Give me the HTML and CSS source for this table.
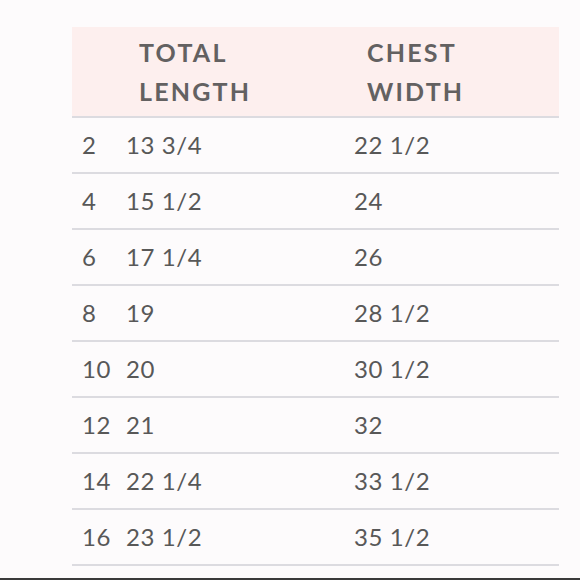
FILE: index.html
```html
<!DOCTYPE html>
<html>
<head>
<meta charset="utf-8">
<link rel="stylesheet" href="styles.css">
</head>
<body>
<div class="page">
  <table class="sizes">
    <colgroup>
      <col class="c-size">
      <col class="c-len">
      <col class="c-chest">
    </colgroup>
    <thead>
      <tr>
        <th></th>
        <th>TOTAL<br>LENGTH</th>
        <th>CHEST<br>WIDTH</th>
      </tr>
    </thead>
    <tbody>
      <tr><td>2</td><td>13 3/4</td><td>22 1/2</td></tr>
      <tr><td>4</td><td>15 1/2</td><td>24</td></tr>
      <tr><td>6</td><td>17 1/4</td><td>26</td></tr>
      <tr><td>8</td><td>19</td><td>28 1/2</td></tr>
      <tr><td>10</td><td>20</td><td>30 1/2</td></tr>
      <tr><td>12</td><td>21</td><td>32</td></tr>
      <tr><td>14</td><td>22 1/4</td><td>33 1/2</td></tr>
      <tr><td>16</td><td>23 1/2</td><td>35 1/2</td></tr>
    </tbody>
  </table>
</div>
</body>
</html>
```
FILE: styles.css
```css
html, body {
  margin: 0;
  padding: 0;
}
body {
  background: #fdfbfc;
  width: 580px;
  height: 580px;
  overflow: hidden;
}
.page {
  box-sizing: border-box;
  height: 580px;
  padding: 27px 21px 0 72px;
  border-bottom: 2px solid #3a3a3a;
}
.sizes {
  width: 487px;
  border-collapse: collapse;
  table-layout: fixed;
  font-family: Lato, "Liberation Sans", sans-serif;
  color: #585858;
}
.c-size { width: 44px; }
.c-len { width: 228px; }
.c-chest { width: 215px; }
.sizes thead tr {
  background: #fdefee;
}
.sizes th {
  height: 89px;
  padding: 0 0 0 23px;
  text-align: left;
  vertical-align: middle;
  font-weight: 700;
  font-size: 25px;
  line-height: 39px;
  letter-spacing: 2.2px;
  color: #636161;
  border-bottom: 2px solid #dcdbe0;
}
.sizes td {
  height: 54px;
  padding: 0 0 0 10px;
  font-weight: 400;
  font-size: 24px;
  line-height: 30px;
  letter-spacing: 0.6px;
  vertical-align: middle;
  border-bottom: 2px solid #dcdbe0;
  white-space: nowrap;
}
```
